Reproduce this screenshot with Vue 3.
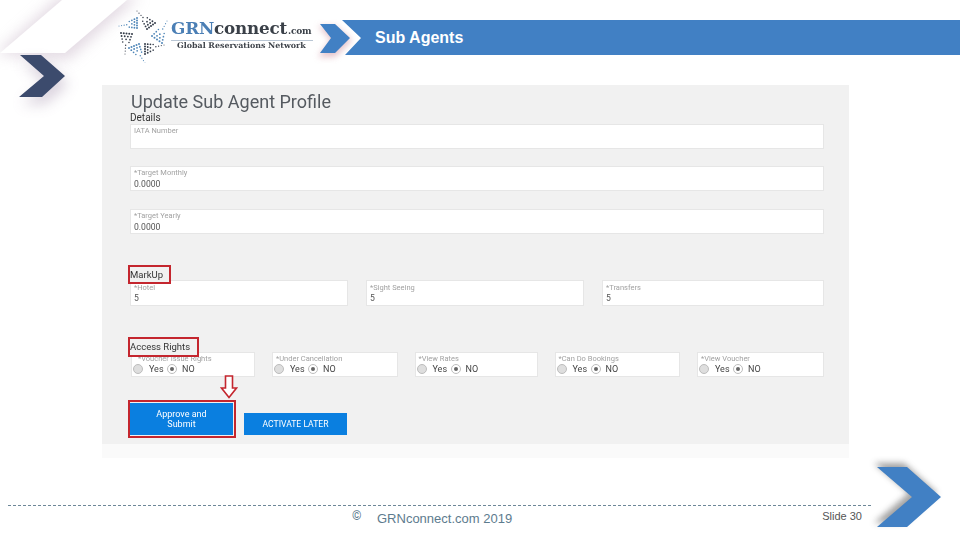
<template>
  <div class="slide">
    <!-- slide artwork, sits behind everything -->
    <svg class="art" width="960" height="540" viewBox="0 0 960 540">
      <defs>
        <filter id="soft" x="-50%" y="-50%" width="200%" height="200%"><feGaussianBlur stdDeviation="7" /></filter>
        <filter id="softer" x="-50%" y="-50%" width="200%" height="200%"><feGaussianBlur stdDeviation="3" /></filter>
      </defs>
      <polygon points="-4,54 60,-4 140,-4 68,60" fill="#cdbdcd" opacity="0.55" filter="url(#soft)" />
      <polygon points="0,53 62,0 127,0 65,53" fill="#fff" />
      <polygon points="22,62 44,62 68,84 45,104 22,104 47,84" fill="#a896b0" opacity="0.45" filter="url(#soft)" />
      <polygon points="20,55 41,55 65,76 42,97 19,97 44,76" fill="#3c4b6d" />
      <polygon points="318,26 335,26 352,40 335,57 318,57 331,40" fill="#d9a9b4" opacity="0.7" filter="url(#softer)" />
      <polygon points="320,24 335,24 350,38 335,53 320,53 331,38" fill="#4180c4" />
      <polygon points="874,463 904,463 937,493 904,523 874,523 909,493" fill="#555" opacity="0.55" filter="url(#softer)" />
      <polygon points="877,467 907,467 941,497 907,527 877,527 912,497" fill="#4180c4" />
    </svg>

    <header class="top">
      <div class="logo">
        <svg class="star" width="54" height="54" viewBox="116 9 54 54">
          <circle v-for="(d, i) in starDots" :key="i" :cx="d.x" :cy="d.y" :r="d.r" :fill="d.c" />
        </svg>
        <div class="brand">
          <div class="brand-name"><span class="grn">GRN</span>connect<small>.com</small></div>
          <div class="brand-sub">Global Reservations Network</div>
        </div>
      </div>
      <div class="banner">Sub Agents</div>
    </header>

    <main class="panel">
      <h1>Update Sub Agent Profile</h1>
      <div class="details">Details</div>

      <div v-for="f in detailFields" :key="f.label" class="field wide">
        <label>{{ f.label }}</label>
        <div class="val">{{ f.value }}</div>
      </div>

      <div class="marked markup">MarkUp</div>
      <div class="row-markup">
        <div v-for="f in markupFields" :key="f.label" class="field">
          <label>{{ f.label }}</label>
          <div class="val">{{ f.value }}</div>
        </div>
      </div>

      <div class="marked access">Access Rights</div>
      <div class="row-access">
        <div v-for="r in rights" :key="r" class="field">
          <label class="rlabel">{{ r }}</label>
          <div class="radios">
            <span class="radio"></span><span class="ropt yes">Yes</span>
            <span class="radio on"></span><span class="ropt no">NO</span>
          </div>
        </div>
      </div>

      <div class="actions">
        <div class="frame">
          <svg class="arrow" width="18" height="24" viewBox="0 0 18 24">
            <polygon points="5.5,1 12.5,1 12.5,13 16.5,13 9,22.5 1.5,13 5.5,13" fill="#fff" stroke="#c4262e" stroke-width="1.6" />
          </svg>
          <button class="approve">Approve and<br />Submit</button>
        </div>
        <button class="later">ACTIVATE LATER</button>
      </div>
    </main>
    <div class="panel-fade"></div>

    <footer class="foot">
      <span class="copy">©</span>
      <span class="site">GRNconnect.com 2019</span>
      <span class="num">Slide 30</span>
    </footer>
  </div>
</template>

<script setup>
const detailFields = [
  { label: 'IATA Number', value: '' },
  { label: '*Target Monthly', value: '0.0000' },
  { label: '*Target Yearly', value: '0.0000' }
]
const markupFields = [
  { label: '*Hotel', value: '5' },
  { label: '*Sight Seeing', value: '5' },
  { label: '*Transfers', value: '5' }
]
const rights = ['*Voucher Issue Rights', '*Under Cancellation', '*View Rates', '*Can Do Bookings', '*View Voucher']

// logo blades: tip, then the two ends of the wide side
const blades = [
  { t: [119, 26], a: [137, 18], b: [137, 28], c: '#4f86b8' },
  { t: [137, 11], a: [155, 23], b: [147, 29], c: '#333b48' },
  { t: [167, 21], a: [152, 36], b: [162, 43], c: '#4f86b8' },
  { t: [164, 45], a: [145, 44], b: [145, 54], c: '#333b48' },
  { t: [145, 63], a: [129, 48], b: [139, 44], c: '#4f86b8' },
  { t: [125, 54], a: [121, 33], b: [132, 34], c: '#333b48' }
]

const starDots = blades.flatMap((bl) => {
  const out = []
  const rows = 8
  for (let i = 0; i < rows; i++) {
    const k = i / (rows - 1)
    const n = Math.max(1, Math.round(k * k * 5))
    for (let j = 0; j < n; j++) {
      const s = n === 1 ? 0.5 : j / (n - 1)
      const ex = bl.a[0] + (bl.b[0] - bl.a[0]) * s
      const ey = bl.a[1] + (bl.b[1] - bl.a[1]) * s
      out.push({
        x: bl.t[0] + (ex - bl.t[0]) * k,
        y: bl.t[1] + (ey - bl.t[1]) * k,
        r: 0.5 + k * 0.5,
        c: bl.c
      })
    }
  }
  return out
})
</script>

<style>
html, body { margin: 0; background: #fff; }
</style>

<style scoped>
.slide { position: relative; width: 960px; height: 540px; overflow: hidden; background: #fff; font-family: Roboto, "Liberation Sans", sans-serif; }
.art { position: absolute; left: 0; top: 0; }

.top { position: relative; display: flex; height: 85px; box-sizing: border-box; }
.logo { display: flex; width: 223px; margin-left: 118px; padding-top: 9px; height: 54px; flex: none; filter: blur(0.3px); }
.star { flex: none; margin-left: -2px; }
.brand { margin-left: 1px; padding-top: 10px; width: 142px; }
.brand-name { font: bold 16.8px/18px "DejaVu Serif", serif; color: #3a4048; white-space: nowrap; letter-spacing: -0.2px; border-bottom: 1px solid #b9c6d4; }
.grn { color: #4b7fb5; }
.brand-name small { font-size: 9px; margin-left: 1px; }
.brand-sub { font: bold 7.9px/10px "DejaVu Serif", serif; color: #3f444b; white-space: nowrap; margin-left: 6px; }
.banner {
  flex: 1; height: 35px; margin-top: 20px; padding-left: 33px; box-sizing: border-box; background: #4180c4; color: #fff;
  font: bold 16px/35px "Liberation Sans", sans-serif;
  clip-path: polygon(0 0, 100% 0, 100% 100%, 3px 100%, 19px 18px);
  margin-left: 1px;
}

.panel { position: relative; width: 747px; height: 359px; margin-left: 102px; padding: 7px 25px 0 28px; box-sizing: border-box; background: #f1f1f1; filter: blur(0.3px); }
.panel-fade { width: 747px; height: 14px; margin-left: 102px; background: #fafafa; }
h1 { margin: 0; font-weight: 400; font-size: 18px; line-height: 20px; color: #555a60; padding-left: 1px; }
.details { font-size: 10px; line-height: 12px; color: #333; }

.field { background: #fff; border: 1px solid #e6e6e6; box-sizing: border-box; padding: 0 3px; overflow: hidden; }
.field.wide { height: 25px; margin-bottom: 18px; }
.details + .field.wide { margin-bottom: 17px; }
.field label { display: block; font-size: 7.5px; line-height: 9px; color: #a2a2a2; padding-top: 1px; }
.val { font-size: 8.6px; line-height: 10px; color: #555; margin-top: 2px; }

.marked { position: relative; z-index: 1; box-sizing: border-box; margin-left: -2px; border: 2px solid #c4262e; background: #f1f1f1; font-size: 9.5px; color: #333; }
.markup { width: 43px; height: 19px; line-height: 15px; margin-top: 31px; margin-bottom: -4px; white-space: nowrap; }
.access { width: 71px; height: 20px; line-height: 16px; margin-top: 31px; margin-bottom: -5px; white-space: nowrap; }

.row-markup { display: grid; grid-template-columns: 218px 218px 222px; column-gap: 18px; }
.row-markup .field { height: 26px; padding-left: 3px; }
.row-markup .val { margin-top: 1px; }
.row-markup .field label { padding-top: 2px; }

.row-access { display: grid; grid-template-columns: 124px 125.5px 123px 125.5px 127px; column-gap: 17px; margin-left: 1px; }
.row-access .field { height: 25px; padding: 0 2px 0 1px; }
.rlabel { padding-left: 2px; font-size: 7.5px; }
.row-access .field:first-child .rlabel { padding-left: 5px; }
.radios { display: flex; align-items: center; height: 11px; margin-top: 0; font-size: 9px; color: #444; }
.radio { position: relative; width: 8px; height: 8px; border: 1px solid #bdbdbd; border-radius: 50%; background: #dedede; flex: none; }
.radio.on { background: #fff; }
.radio.on::after { content: ""; position: absolute; left: 2px; top: 2px; width: 4px; height: 4px; border-radius: 50%; background: #666; }
.yes { margin: 0 2px 0 6px; width: 16px; }
.no { margin-left: 5px; }

.actions { display: flex; align-items: flex-end; gap: 8px; margin-top: 23px; margin-left: -2px; }
.frame { position: relative; width: 108px; height: 38px; box-sizing: border-box; border: 2px solid #c4262e; background: #f1f1f1; padding-top: 1px; }
.arrow { position: absolute; left: 90px; top: -27px; }
button { border: 0; padding: 0; background: #0a7fe0; color: #fff; font-family: Roboto, "Liberation Sans", sans-serif; font-size: 9px; line-height: 10px; }
.approve { display: block; width: 103px; height: 32px; }
.later { width: 103px; height: 22px; margin-bottom: 3px; font-size: 8.6px; }

.foot { position: relative; display: flex; width: 863px; height: 21px; margin: 47px 0 0 8px; border-top: 1px dashed #6d8798; color: #5d7b8e; }
.copy { margin-top: 3px; margin-left: 344px; width: 25px; font-size: 12px; line-height: 14px; }
.site { margin-top: 5px; font: 13px/15px "Liberation Sans", sans-serif; }
.num { margin-left: auto; margin-right: 9px; margin-top: 4px; font: 11px/13px "Liberation Sans", sans-serif; color: #555; }
</style>
